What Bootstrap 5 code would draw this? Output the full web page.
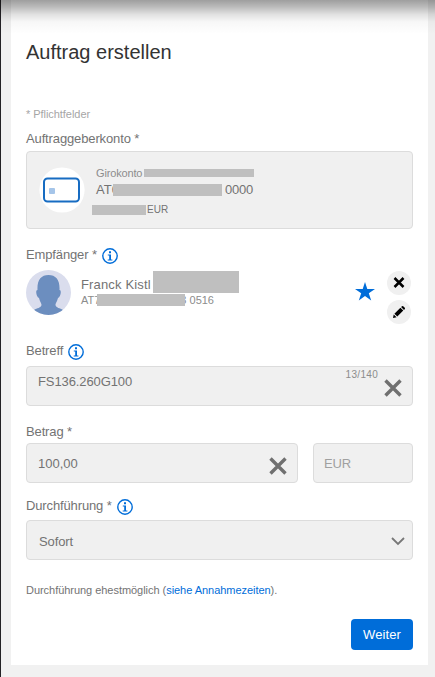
<!DOCTYPE html>
<html lang="de">
<head>
<meta charset="utf-8">
<meta name="viewport" content="width=device-width, initial-scale=1">
<title>Auftrag erstellen</title>
<link href="https://cdn.jsdelivr.net/npm/bootstrap@5.3.0/dist/css/bootstrap.min.css" rel="stylesheet">
<style>
  body { font: 13px/16px "Liberation Sans", Arial, sans-serif; color: #737373; background: #f1f1f1; }
  .page { min-height: 677px; border-left: 1px solid #242226; padding: 0 7px 12px 10px; }
  .top-shade { height: 34px; background: linear-gradient(rgba(0,0,0,.38), rgba(0,0,0,.27) 20%, rgba(0,0,0,.12) 42%, rgba(0,0,0,.03) 64%, transparent); pointer-events: none; }
  .sheet { height: 665px; padding: 36px 15px 15px; }
  .title { font-size: 20px; line-height: 32px; color: #333; font-weight: 400; }
  .hint { font-size: 11px; color: #a6a6a6; margin: 38px 0 8px; letter-spacing: -.05px; }
  .caption { height: 16px; white-space: pre; letter-spacing: -.13px; }
  .caption svg { margin: 1px 0 0 5px; flex: none; }
  .caption-account { padding-top: 1px; }
  .field { height: 40px; background: #f0f0f0; border: 1px solid #dcdcdc; border-radius: 4px; color: #737373; }
  .fs-11 { font-size: 11px; }
  .fs-10 { font-size: 10px; }
  .soft { color: #8c8c8c; }
  .redact { position: relative; z-index: 1; background: #bfbfbf; flex: none; }
  .blue { color: #006dd9; }

  .account { height: 78px; margin: 5px 0 18px; }
  .acc-icon { margin-left: 12px; width: 46px; }
  .acc-text { margin: 2px 0 0 7px; }
  .acc-text > div, .person-text > div { white-space: pre; }
  .name-mask { width: 110px; height: 8px; }
  .girokonto { width: 48px; letter-spacing: -.15px; }
  .iban-row { margin-top: 1px; }
  .iban-start { width: 17px; }
  .iban-mask { width: 109px; height: 12px; margin-right: 3px; }
  .iban-end { letter-spacing: -.25px; }
  .balance-row { margin-top: 4px; }
  .balance-mask { width: 54px; height: 10px; margin-right: 1px; }

  .person { height: 54px; margin: 7px 0 19px; }
  .person-text { margin-left: 10px; }
  .name-row { height: 23px; margin-bottom: -1px; }
  .full-name { width: 72px; line-height: 16px; padding-top: 7px; letter-spacing: .15px; }
  .surname-mask { width: 86px; height: 22px; margin-top: 1px; }
  .partner-start { width: 16px; }
  .partner-mask { width: 88px; height: 12px; }
  .partner-end { width: 29px; direction: rtl; }
  .star { margin-top: 12px; }
  .actions { gap: 5px; margin: 1px 2px 0 12px; }
  .round { width: 24px; height: 24px; border-radius: 50%; background: #f0f0f0; }

  .subject { margin: 7px 0 18px; padding: 0 10px 0 11px; }
  .subject-text { margin-top: 7px; letter-spacing: -.1px; }
  .counter { letter-spacing: .3px; }
  .clear { margin: 12px 0 0 6px; }
  .amounts { margin: 3px 0 15px; gap: 15px; }
  .amount { padding: 1px 10px 0 11px; }
  .amount svg { margin-top: 4px; }
  .currency { width: 100px; padding: 2px 0 0 10px; color: #a0a0a0; letter-spacing: -.15px; }
  .timing { margin-top: 6px; padding: 3px 7px 0 12px; letter-spacing: -.1px; }
  .note { margin: 22px 0 21px; font-size: 11px; letter-spacing: -.04px; }
  .send { width: 62px; height: 31px; background: #006dd9; border-radius: 4px; font-size: 13px; line-height: 16px; color: #fff; letter-spacing: .1px; }
</style>
</head>
<body>
<svg class="d-none" xmlns="http://www.w3.org/2000/svg">
  <symbol id="info" viewBox="0 0 16 16">
    <circle cx="8" cy="8" r="7.2" fill="none" stroke="#006dd9" stroke-width="1.4"/>
    <path d="M7 3.200h2v2H7zM5.800 6.400H9v5h1.400v1.100H5.700v-1.100h1.500V7.500H5.800z" fill="#006dd9"/>
  </symbol>
  <symbol id="cross" viewBox="0 0 18 18">
    <path d="M1.500 1.500l15 15M16.500 1.500l-15 15" stroke="#707070" stroke-width="3.400"/>
  </symbol>
</svg>
<div class="top-shade position-absolute top-0 start-0 w-100"></div>
<main class="page">
  <form class="sheet bg-white d-flex flex-column">
    <h1 class="title m-0">Auftrag erstellen</h1>
    <div class="hint">* Pflichtfelder</div>
    <div class="caption caption-account">Auftraggeberkonto *</div>

    <div class="field account d-flex align-items-center">
      <svg class="acc-icon flex-shrink-0" height="46" viewBox="0 0 46 46">
        <circle cx="23" cy="23" r="22.6" fill="#fff"/>
        <rect x="5" y="11.500" width="35" height="23" rx="3.500" fill="#fff" stroke="#176cc2" stroke-width="2"/>
        <rect x="10" y="21" width="6" height="6" rx="1" fill="#a5c5e9"/>
      </svg>
      <div class="acc-text d-flex flex-column">
        <div class="d-flex align-items-center fs-11 soft ms-1"><span class="girokonto">Girokonto</span><span class="redact name-mask"></span></div>
        <div class="d-flex align-items-center ms-1 iban-row"><span class="iban-start">AT0</span><span class="redact iban-mask"></span><span class="iban-end">0000</span></div>
        <div class="d-flex align-items-center fs-10 balance-row"><span class="redact balance-mask"></span><span>EUR</span></div>
      </div>
    </div>

    <div class="caption d-flex">Empfänger *<svg width="16" height="16"><use href="#info"/></svg></div>
    <div class="person d-flex">
      <svg class="flex-shrink-0" width="45" height="45" viewBox="0 0 45 45">
        <clipPath id="disc"><circle cx="22.500" cy="22.500" r="22.500"/></clipPath>
        <g clip-path="url(#disc)">
          <path fill="#dadded" d="M0 0h45v45H0z"/>
          <path fill="#6c8ebf" d="M22.500 5C15 5 11 10 11.500 20C9 20 10.500 27 13 28C14 32 15.500 33 15.500 35C15 38 11 38 8 40V46H37V40C34 38 30 38 29.500 35C29.500 33 31 32 32 28C34.500 27 36 20 33.500 20C34 10 30 5 22.500 5Z"/>
        </g>
      </svg>
      <div class="person-text d-flex flex-column">
        <div class="d-flex name-row"><span class="full-name">Franck Kistl</span><span class="redact surname-mask"></span></div>
        <div class="d-flex align-items-center fs-11 soft"><span class="partner-start">AT7</span><span class="redact partner-mask"></span><span class="partner-end"><bdi dir="ltr">3 0516</bdi></span></div>
      </div>
      <svg class="star ms-auto" width="20" height="19" viewBox="0 0 20 19"><path fill="#006dd9" d="M10 0l2.300 7H20l-6.200 4.300 2.400 7.300L10 14.100l-6.200 4.500 2.400-7.300L0 7h7.700z"/></svg>
      <div class="actions d-flex flex-column">
        <span class="round d-flex align-items-center justify-content-center"><svg width="12" height="12" viewBox="0 0 12 12"><path d="M1.500 1l9 9M10.500 1l-9 9" stroke="#000" stroke-width="2.500"/></svg></span>
        <span class="round d-flex align-items-center justify-content-center"><svg width="12" height="12" viewBox="0 0 12 12"><path d="M0 12l.7-3.600 2.900 2.900zM1.400 7.700L7.400 1.700l2.900 2.900-6 6zM8.100 1L9 .2q.6-.4 1.200 0l1.600 1.600q.4.600 0 1.200l-.8.900z"/></svg></span>
      </div>
    </div>

    <div class="caption d-flex">Betreff<svg width="16" height="16"><use href="#info"/></svg></div>
    <div class="field subject d-flex">
      <span class="subject-text">FS136.260G100</span>
      <span class="counter fs-10 soft ms-auto">13/140</span>
      <svg class="clear" width="18" height="18"><use href="#cross"/></svg>
    </div>

    <div class="caption">Betrag *</div>
    <div class="amounts d-flex">
      <div class="field d-flex align-items-center flex-grow-1 amount">100,00<svg class="ms-auto" width="18" height="18"><use href="#cross"/></svg></div>
      <div class="field d-flex align-items-center currency">EUR</div>
    </div>

    <div class="caption d-flex">Durchführung *<svg width="16" height="16"><use href="#info"/></svg></div>
    <div class="field timing d-flex align-items-center justify-content-between"><span>Sofort</span>
      <svg width="14" height="9" viewBox="0 0 14 9"><path d="M1 1l6 6 6-6" fill="none" stroke="#777" stroke-width="1.800"/></svg>
    </div>
    <p class="note">Durchführung ehestmöglich (<a href="#" class="blue text-decoration-none">siehe Annahmezeiten</a>).</p>
    <button type="button" class="btn send p-0 border-0 align-self-end">Weiter</button>
  </form>
</main>
<script src="https://cdn.jsdelivr.net/npm/bootstrap@5.3.0/dist/js/bootstrap.bundle.min.js"></script>
</body>
</html>
